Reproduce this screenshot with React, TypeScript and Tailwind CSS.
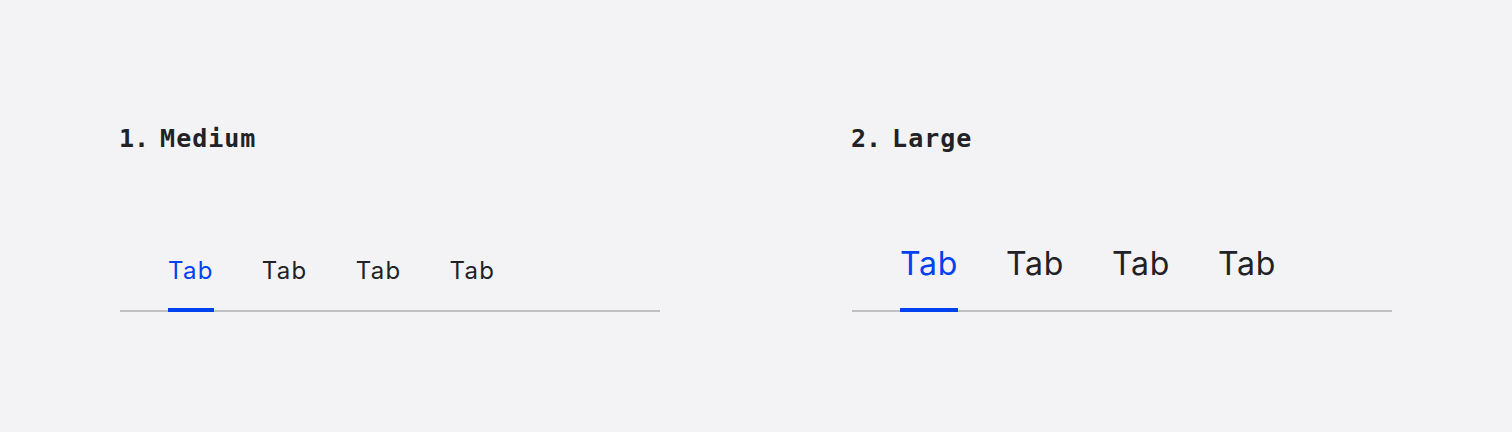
const tabs = ["Tab", "Tab", "Tab", "Tab"];

function TabBar({ size }: { size: "md" | "lg" }) {
  const isLarge = size === "lg";
  return (
    <div className="flex gap-12 pl-12 border-b-2 border-[#c1c1c3]">
      {tabs.map((label, i) => {
        const active = i === 0;
        return (
          <button
            key={i}
            className={`-mb-[2px] border-b-4 font-normal ${
              isLarge
                ? "text-[32px] leading-10 pb-6 tracking-[0.7px]"
                : "text-[24px] leading-8 pb-[21px] tracking-[1.3px]"
            } ${active ? "border-[#0041f0] text-[#0041f0]" : "border-transparent text-[#222226]"}`}
            style={{ fontFamily: "Inter, 'Noto Sans', sans-serif" }}
          >
            {label}
          </button>
        );
      })}
    </div>
  );
}

function Section({ num, title, size }: { num: string; title: string; size: "md" | "lg" }) {
  return (
    <div className="flex-1 flex flex-col">
      <h2
        className="flex -ml-px text-[25px] leading-8 font-bold text-[#222226]"
        style={{ fontFamily: "'DejaVu Sans Mono', 'Liberation Mono', monospace" }}
      >
        <span>{num}</span>
        <span className="ml-[11px] tracking-[1px]">{title}</span>
      </h2>
      <div className="h-[157px] flex flex-col justify-end">
        <TabBar size={size} />
      </div>
    </div>
  );
}

export default function App() {
  return (
    <div className="w-[1512px] h-[432px] bg-[#f3f3f5] flex gap-[192px] px-[120px] pt-[123px]">
      <Section num="1." title="Medium" size="md" />
      <Section num="2." title="Large" size="lg" />
    </div>
  );
}
